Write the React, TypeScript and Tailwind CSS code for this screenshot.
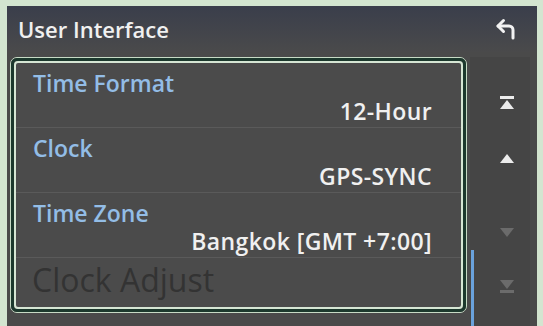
import type { ReactNode } from "react";

const rows = [
  { label: "Time Format", value: "12-Hour" },
  { label: "Clock", value: "GPS-SYNC" },
  { label: "Time Zone", value: "Bangkok [GMT +7:00]" },
];

function BackIcon() {
  return (
    <svg width="24" height="24" viewBox="0 0 24 24" fill="none">
      <path d="M4 9h11a4 4 0 0 1 4 4v8" stroke="#f2f2f2" strokeWidth="3" strokeLinecap="round" strokeLinejoin="round" />
      <path d="M9.5 3.5L4 9l5.5 5.5" stroke="#f2f2f2" strokeWidth="3" strokeLinecap="round" strokeLinejoin="round" />
    </svg>
  );
}

function ScrollIcon({ kind, dim }: { kind: "top" | "up" | "down" | "bottom"; dim?: boolean }) {
  const c = dim ? "#6b6b6b" : "#ececec";
  let shape: ReactNode = null;
  if (kind === "top")
    shape = (
      <>
        <rect x="0" y="0" width="14" height="3" fill={c} />
        <polygon points="7,4 14,13 0,13" fill={c} />
      </>
    );
  if (kind === "up") shape = <polygon points="7,3 14,12 0,12" fill={c} />;
  if (kind === "down") shape = <polygon points="0,2 14,2 7,11" fill={c} />;
  if (kind === "bottom")
    shape = (
      <>
        <polygon points="0,0 14,0 7,9" fill={c} />
        <rect x="0" y="10" width="14" height="3" fill={c} />
      </>
    );
  return (
    <svg width="14" height="14" viewBox="0 0 14 14">
      {shape}
    </svg>
  );
}

export default function App() {
  return (
    <div
      className="w-[543px] h-[326px] overflow-hidden bg-[#d3e5d0] pl-[7px] pr-[6px] pt-[6px]"
      style={{ fontFamily: '"Open Sans", "Noto Sans", sans-serif' }}
    >
      <div className="flex h-full flex-col bg-[#4a4a4a]">
        <div className="flex h-[46px] shrink-0 items-center justify-between bg-gradient-to-b from-[#3a3e4b] to-[#4a4a4b] pl-[11px] pr-[19px]">
          <span className="text-[22px] font-semibold text-[#f0f0f0]">User Interface</span>
          <BackIcon />
        </div>
        <div className="flex flex-1 pt-[5px]">
          <div className="ml-[3px] h-[256px] w-[457px] rounded-[7px] border border-[#c7dbc5]">
            <div className="h-full rounded-[6px] border-[3px] border-[#1c392d]">
              <div className="flex h-full flex-col overflow-hidden rounded-[4px] border-2 border-[#d6e6d4] bg-[#4b4b4b]">
                {rows.map((r) => (
                  <div key={r.label} className="flex h-[65px] shrink-0 flex-col border-b border-[#5a5a5a] pl-[17px] pr-[29px] pt-[6px]">
                    <span className="text-[23px] leading-[28px] font-semibold text-[#93bde6]">{r.label}</span>
                    <span className="self-end text-[23px] leading-[28px] font-semibold tracking-[0.4px] text-[#f0f0f0]">{r.value}</span>
                  </div>
                ))}
                <div className="pl-[16px] pt-[4px] text-[32px] leading-[36px] font-normal text-[#333333]">Clock Adjust</div>
              </div>
            </div>
          </div>
          <div className="relative ml-[3px] flex w-[60px] flex-col items-center bg-[#454545] pt-[39px] pl-[14px]">
            <div className="absolute left-[1px] top-[193px] h-[80px] w-[3px] bg-[#6aa2dc]" />
            <ScrollIcon kind="top" />
            <div className="h-[41px]" />
            <ScrollIcon kind="up" />
            <div className="h-[61px]" />
            <ScrollIcon kind="down" dim />
            <div className="h-[40px]" />
            <ScrollIcon kind="bottom" dim />
          </div>
        </div>
      </div>
    </div>
  );
}
